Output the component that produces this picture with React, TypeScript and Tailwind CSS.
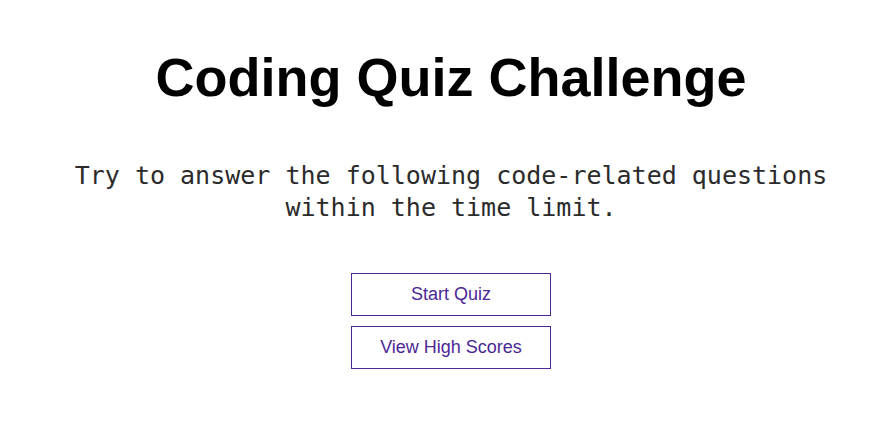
import React from 'react';

const App: React.FC = () => {
  return (
    <div className="min-h-[428px] w-full bg-white pl-[22px]">
      <div className="flex flex-col items-center pt-[46px]">
        {/* Title */}
        <h1 className="text-[54px] leading-[62px] font-bold text-black font-['Liberation_Sans',Arial,sans-serif]">
          Coding Quiz Challenge
        </h1>

        {/* Intro text */}
        <p className="mt-[52px] w-[760px] text-center text-[25px] leading-[32px] text-[#2b2b2b] font-['DejaVu_Sans_Mono','Liberation_Mono',monospace]">
          Try to answer the following code-related questions within the time limit.
        </p>

        {/* Actions */}
        <div className="mt-[49px] flex flex-col gap-[10px]">
          <button className="h-[43px] w-[200px] border border-[#4b2896] bg-white text-[18px] text-[#4b2896] font-['Liberation_Sans',Arial,sans-serif]">
            Start Quiz
          </button>
          <button className="h-[43px] w-[200px] border border-[#4b2896] bg-white text-[18px] text-[#4b2896] font-['Liberation_Sans',Arial,sans-serif]">
            View High Scores
          </button>
        </div>
      </div>
    </div>
  );
};

export default App;
